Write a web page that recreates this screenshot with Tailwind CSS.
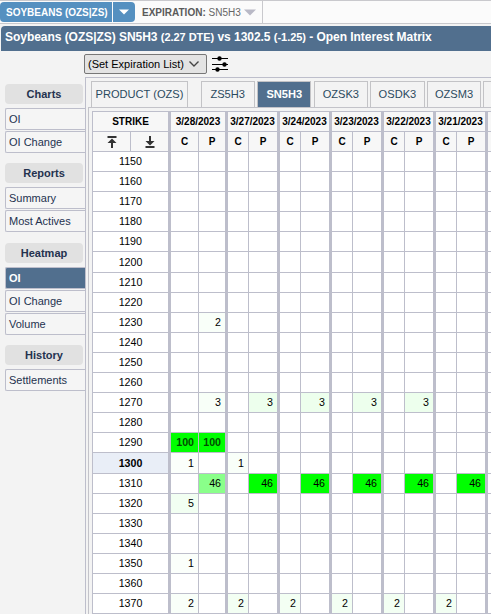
<!DOCTYPE html>
<html lang="en">
<head>
  <meta charset="UTF-8">
  <meta name="viewport" content="width=device-width, initial-scale=1.0">
  <title>Open Interest Matrix</title>
  <script src="https://cdn.jsdelivr.net/npm/@tailwindcss/browser@4"></script>
</head>
<body class="h-[614px] overflow-hidden bg-[#f3f3f3] font-['Liberation_Sans',Arial,sans-serif] text-[11px] text-black">

  <!-- Product / expiration bar -->
  <div class="flex h-6 border-y border-[#c9c9cd] bg-[#fbfbfb] pt-px">
    <div class="flex h-5 w-28 items-center rounded-l-sm bg-[#5590c0] pl-1.5 text-[10px] font-bold whitespace-nowrap text-white">SOYBEANS (OZS|ZS)</div>
    <div class="ml-px flex h-5 w-[22px] items-center justify-center rounded-r-sm bg-[#5590c0]">
      <svg width="10" height="6" viewBox="0 0 10 6"><path d="M0 0.5h10L5 5.5z" fill="#fff"/></svg>
    </div>
    <div class="-mt-px flex h-[22px] w-[128px] items-center border-r border-[#c9c9cd] pl-[7px] text-[10px] whitespace-nowrap text-[#666]">
      <span><b class="text-[#5a5a5a]">EXPIRATION:</b> SN5H3</span>
      <svg class="ml-[3px] shrink-0" width="12" height="7" viewBox="0 0 12 7"><path d="M0 0.5h12L6 6.5z" fill="#b9b9c6"/></svg>
    </div>
  </div>

  <!-- Title -->
  <div class="mt-0.5 ml-px flex h-[25px] items-center rounded-tl-sm bg-[#516f8e] pl-1 text-[12px] font-bold whitespace-pre text-white">
    <span class="-mt-1 tracking-[-0.04px]">Soybeans (OZS|ZS) SN5H3 <span class="text-[11px]">(2.27 DTE)</span> vs 1302.5 <span class="text-[11px]">(-1.25)</span> - Open Interest Matrix</span>
  </div>

  <!-- Expiration list -->
  <div class="flex h-[26px] pt-[3px] pl-[84px]">
    <div class="flex h-5 w-[123px] items-center rounded-xs border border-[#777] bg-[#e3e3e3] pl-[3px] text-[11px] whitespace-nowrap">
      <span>(Set Expiration List)</span>
      <svg class="ml-[5px]" width="10" height="6" viewBox="0 0 10 6" fill="none" stroke="#444" stroke-width="1.4"><path d="M0.5 0.5L5 5L9.5 0.5"/></svg>
    </div>
    <svg class="mt-px ml-[5px]" width="16" height="17" viewBox="0 0 16 17" stroke="#000" stroke-width="1.2">
      <path d="M0 3.5h16M0 9.5h16M0 14.5h16"/>
      <g stroke="none"><circle cx="7.5" cy="3.5" r="2.2"/><circle cx="12.5" cy="9.5" r="2.2"/><circle cx="5.5" cy="14.5" r="2.2"/></g>
    </svg>
  </div>

  <div class="flex">
    <!-- Sidebar -->
    <nav id="sidebar" class="w-[85px] shrink-0 pt-[7px] pl-[5px] text-[#24324f]"></nav>

    <main class="h-[540px] w-[406px] shrink-0 overflow-hidden border-t border-l border-[#bdbecb] pt-[3px] pl-0.5">
      <div class="flex w-[420px] pl-[3px] text-[11.1px] text-[#2b4a5e]">
        <div class="mr-[12.6px] flex h-[26px] w-[97px] shrink-0 items-center justify-center border border-b-0 border-[#c3c3c6] whitespace-nowrap">PRODUCT (OZS)</div>
        <div id="tabs" class="flex gap-[2.4px]"></div>
      </div>
      <div class="w-[420px] border-t border-l border-[#c3c3c9] pt-[3px] pl-[3px]">
        <div id="matrix" class="w-[460px] border-t border-l border-[#bdbecb] bg-white"></div>
      </div>
    </main>
  </div>

  <script>
    // Sidebar groups
    const groups = [
      { name: 'Charts', items: ['OI', 'OI Change'] },
      { name: 'Reports', items: ['Summary', 'Most Actives'] },
      { name: 'Heatmap', items: ['OI', 'OI Change', 'Volume'], active: 0 },
      { name: 'History', items: ['Settlements'] },
    ];
    document.getElementById('sidebar').innerHTML = groups.map(g => `
      <div class="mb-[10.4px]">
        <h3 class="mb-1 flex h-5 w-[78px] items-center justify-center rounded-sm bg-[#e1e1e1] font-bold">${g.name}</h3>
        ${g.items.map((t, i) => i === g.active
          ? `<div class="mb-px flex h-[22px] items-center rounded-l-xs border border-r-0 border-[#bdbecb] bg-[#516f8e] pl-[3px] font-bold text-white">${t}</div>`
          : `<div class="mb-px flex h-[22px] items-center rounded-l-xs border border-r-0 border-[#bdbecb] bg-[#f5f5f5] pl-[3px]">${t}</div>`).join('')}
      </div>`).join('');

    // Expiration tabs
    const tabs = ['ZS5H3', 'SN5H3', 'OZSK3', 'OSDK3', 'OZSM3', ''];
    document.getElementById('tabs').innerHTML = tabs.map(t => t === 'SN5H3'
      ? `<div class="flex h-[26px] w-[54.2px] shrink-0 items-center justify-center border border-b-0 border-[#c3c3c6] bg-[#516f8e] font-bold text-white">${t}</div>`
      : `<div class="flex h-[26px] w-[54.2px] shrink-0 items-center justify-center border border-b-0 border-[#c3c3c6]">${t}</div>`).join('');

    // Matrix
    const dates = ['3/28/2023', '3/27/2023', '3/24/2023', '3/23/2023', '3/22/2023', '3/21/2023', ''];
    // strike -> values in C/P order, two per date
    const data = {
      1230: { 1: [2, '#f9fff9'] },
      1270: { 1: [3, '#f8fff8'], 3: [3, '#edffed'], 5: [3, '#edffed'], 7: [3, '#edffed'], 9: [3, '#edffed'] },
      1290: { 0: [100, '#00ff00'], 1: [100, '#00ff00'] },
      1300: { 0: [1, '#fbfffb'], 2: [1, '#f9fff9'] },
      1310: { 1: [46, '#8aff8a'], 3: [46, '#00ff00'], 5: [46, '#00ff00'], 7: [46, '#00ff00'], 9: [46, '#00ff00'], 11: [46, '#00ff00'] },
      1320: { 0: [5, '#f2fff2'] },
      1350: { 0: [1, '#fbfffb'] },
      1370: { 0: [2, '#f9fff9'], 2: [2, '#f3fff3'], 4: [2, '#f3fff3'], 6: [2, '#f3fff3'], 8: [2, '#f3fff3'], 10: [2, '#f3fff3'] },
    };
    const cols = i => i === 0 ? 'w-[28px]' : i === 1 ? 'w-[29px]' : i % 2 ? 'w-[31px]' : 'w-[21px]';
    const edge = i => i % 2 ? 'border-r-3' : 'border-r';

    let html = `
      <div class="flex h-5 bg-[#f7f7f7] text-[10px] font-bold">
        <div class="flex w-[78px] items-center justify-center border-r-3 border-b border-[#bdbecb]">STRIKE</div>
        ${dates.map((d, i) => `<div class="${i === 0 ? 'w-[57px]' : 'w-[52px]'} flex items-center justify-center border-r-3 border-b border-[#bdbecb]">${d}</div>`).join('')}
      </div>
      <div class="flex h-5 bg-[#f7f7f7] text-[10px] font-bold">
        <div class="flex w-[38px] items-center justify-center border-r border-b border-[#bdbecb]">
          <svg width="10" height="12" viewBox="0 0 10 12" fill="#333"><path d="M0.5 0h9v2h-9zM5 2.5L9.5 7H6V12H4V7H0.5z"/></svg>
        </div>
        <div class="flex w-[40px] items-center justify-center border-r-3 border-b border-[#bdbecb]">
          <svg width="10" height="12" viewBox="0 0 10 12" fill="#333"><path d="M0.5 10h9V12h-9zM5 9.5L0.5 5H4V0H6V5H9.5z"/></svg>
        </div>
        ${Array.from({ length: 14 }, (_, i) => `<div class="${cols(i)} ${edge(i)} flex items-center justify-center border-b border-[#bdbecb]">${i < 12 ? (i % 2 ? 'P' : 'C') : ''}</div>`).join('')}
      </div>`;

    for (let s = 1150; s <= 1370; s += 10) {
      const tall = s === 1200 || s === 1300;
      html += `<div class="flex text-[10.67px] ${tall ? 'h-[21px]' : 'h-5'}">
        <div class="flex w-[78px] items-center justify-center border-r-3 border-b border-[#bdbecb] pb-px ${s === 1300 ? 'bg-[#e9eef7] font-bold' : ''}">${s}</div>
        ${Array.from({ length: 14 }, (_, i) => {
          const v = (data[s] || {})[i];
          return `<div class="${cols(i)} ${edge(i)} flex items-center justify-end border-b border-[#bdbecb] pr-1 pb-px ${v && v[0] === 100 ? 'font-bold text-[#004d00]' : ''}" ${v ? `style="background:${v[1]}"` : ''}>${v ? v[0] : ''}</div>`;
        }).join('')}
      </div>`;
    }
    document.getElementById('matrix').innerHTML = html;
  </script>
</body>
</html>
